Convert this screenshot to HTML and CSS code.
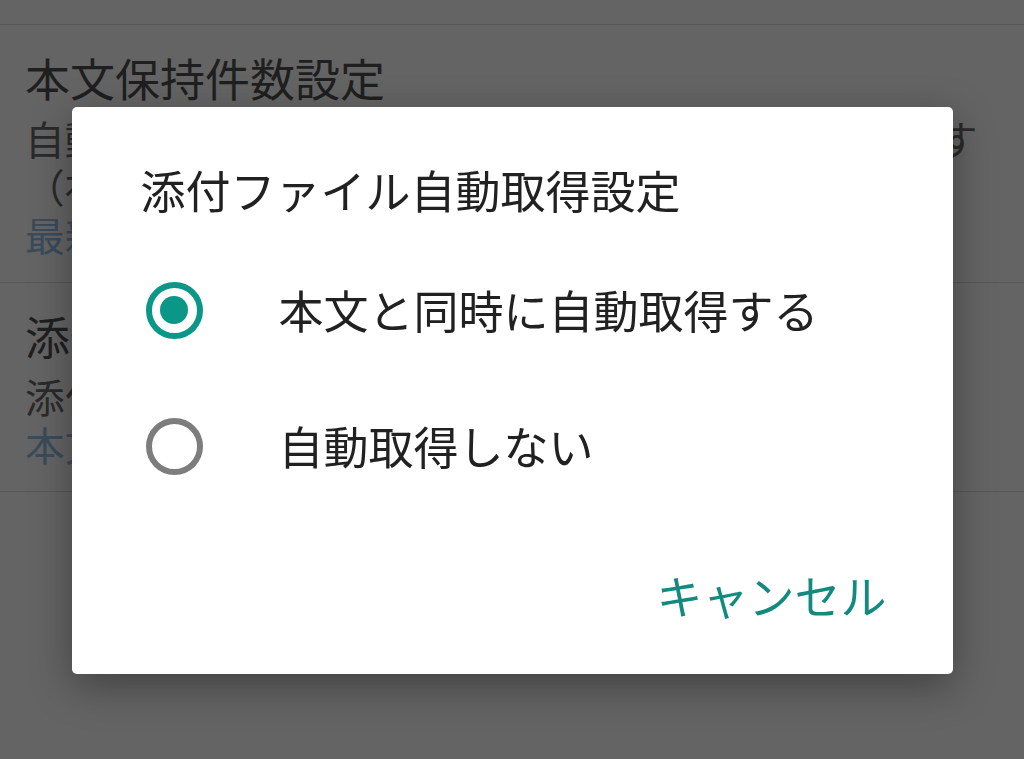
FILE: index.html
```html
<!DOCTYPE html>
<html lang="ja">
<head>
<meta charset="utf-8">
<title>添付ファイル自動取得設定</title>
<link rel="stylesheet" href="styles.css">
</head>
<body>
<div class="screen">
  <div class="top-strip"></div>
  <section class="pref">
    <div class="pref-title">本文保持件数設定</div>
    <div class="pref-summary">
      <div class="line">自動取得で本文を保持するメールの件数を設定します</div>
      <div class="line">（初期値：最新100件）</div>
      <div class="line value">最新100件</div>
    </div>
  </section>
  <section class="pref">
    <div class="pref-title">添付ファイル自動取得設定</div>
    <div class="pref-summary">
      <div class="line">添付ファイルを自動で取得するかを設定します</div>
      <div class="line value">本文と同時に自動取得する</div>
    </div>
  </section>
</div>

<div class="scrim">
  <div class="dialog">
    <div class="dialog-title">添付ファイル自動取得設定</div>
    <div class="options">
      <div class="option">
        <span class="radio checked"><span class="dot"></span></span>
        <span class="option-label">本文と同時に自動取得する</span>
      </div>
      <div class="option">
        <span class="radio"></span>
        <span class="option-label">自動取得しない</span>
      </div>
    </div>
    <div class="actions">
      <span class="btn">キャンセル</span>
    </div>
  </div>
</div>
</body>
</html>
```

FILE: styles.css
```css
* { box-sizing: border-box; }
html, body {
  margin: 0;
  padding: 0;
  width: 1024px;
  height: 759px;
  overflow: hidden;
  background: #646464;
  font-family: "Noto Sans CJK JP", "Noto Sans", sans-serif;
}
.screen {
  width: 1024px;
  height: 759px;
}
.top-strip {
  height: 25px;
  border-bottom: 1px solid #575757;
}
.pref {
  padding: 25px 25px 24px 25px;
  border-bottom: 1px solid #575757;
}
.pref + .pref {
  padding-bottom: 23px;
}
.pref-title {
  font-size: 45px;
  line-height: 56px;
  color: #1f1f1f;
  white-space: nowrap;
  margin-bottom: 8px;
}
.pref-summary {
  font-size: 39.7px;
  line-height: 48px;
  color: #2a2a2a;
  white-space: nowrap;
}
.pref-summary .value {
  color: #3a4b5a;
}

.scrim {
  position: fixed;
  inset: 0;
  display: flex;
  justify-content: center;
  align-items: flex-start;
  padding-top: 107px;
}
.dialog {
  width: 881px;
  height: 567px;
  background: #ffffff;
  border-radius: 5px;
  box-shadow: 0 12px 40px rgba(0, 0, 0, 0.35);
  display: flex;
  flex-direction: column;
}
.dialog-title {
  font-size: 45px;
  line-height: 56px;
  color: #212121;
  padding: 55px 0 0 69px;
  white-space: nowrap;
}
.options {
  margin-top: 24px;
  display: flex;
  flex-direction: column;
}
.option {
  height: 136px;
  display: flex;
  align-items: center;
  padding-left: 74px;
}
.radio {
  width: 57px;
  height: 57px;
  border-radius: 50%;
  border: 6px solid #7d7d7d;
  display: flex;
  align-items: center;
  justify-content: center;
  flex: none;
}
.radio.checked {
  border-color: #0a9787;
}
.radio .dot {
  width: 28px;
  height: 28px;
  border-radius: 50%;
  background: #0a9787;
}
.option-label {
  margin-left: 76px;
  font-size: 45px;
  line-height: 56px;
  color: #212121;
  white-space: nowrap;
}
.actions {
  margin-top: 30px;
  height: 100px;
  display: flex;
  justify-content: flex-end;
  align-items: center;
  padding-right: 66px;
}
.btn {
  font-size: 46px;
  line-height: 56px;
  color: #14897e;
  white-space: nowrap;
}
```
